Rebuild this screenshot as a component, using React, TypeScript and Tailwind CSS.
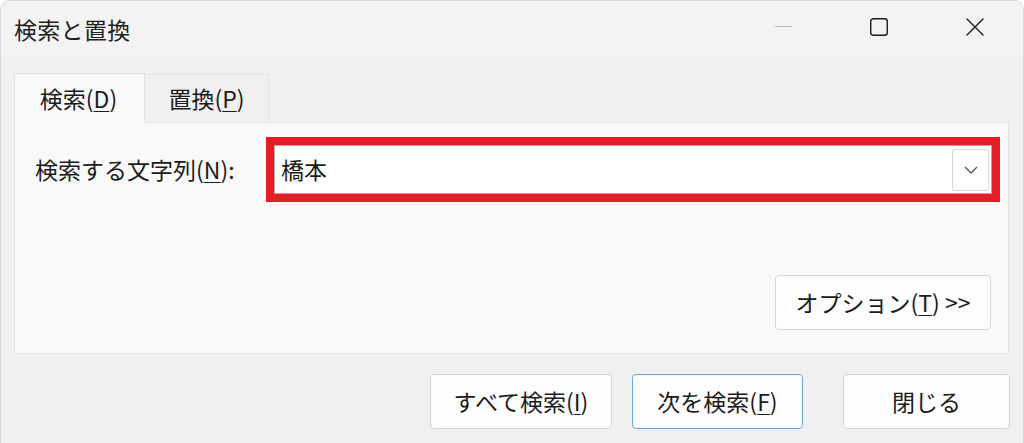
import React from 'react';

function Accel({ children }: { children: React.ReactNode }) {
  return <span className="underline underline-offset-[3px] decoration-1">{children}</span>;
}

function DialogButton({
  children,
  focused = false,
  className = '',
}: {
  children: React.ReactNode;
  focused?: boolean;
  className?: string;
}) {
  return (
    <button
      className={`h-[55px] rounded-[4px] bg-[#fdfdfd] text-[23px] text-[#1b1b1b] flex items-center justify-center ${
        focused ? 'border border-[#6aa8de]' : 'border border-[#d6d6d6]'
      } ${className}`}
    >
      {children}
    </button>
  );
}

export default function App() {
  return (
    <div
      className="w-[1024px] h-[443px] overflow-hidden bg-[#f0f0f0] rounded-t-[10px] border-t border-l border-r border-[#d8d8d8] text-[#1b1b1b]"
      style={{ fontFamily: '"Noto Sans CJK JP", "Noto Sans", sans-serif' }}
    >
      {/* title bar */}
      <div className="h-[56px] bg-[#f3f3f3] flex items-center justify-between">
        <div className="pl-[13px] text-[23px] leading-none text-[#1f1f1f] tracking-[0.3px]">検索と置換</div>
        <div className="flex items-center h-full">
          <div className="w-[96px] h-full flex items-center justify-center">
            <div className="w-[17px] h-px bg-[#bdbdbd] mt-[-5px]" />
          </div>
          <div className="w-[96px] h-full flex items-center justify-center">
            <svg width="18" height="18" viewBox="0 0 18 18" className="mt-[-4px]">
              <rect x="0.75" y="0.75" width="16.5" height="16.5" rx="2.5" fill="none" stroke="#1b1b1b" strokeWidth="1.4" />
            </svg>
          </div>
          <div className="w-[96px] h-full flex items-center justify-center mr-0">
            <svg width="18" height="18" viewBox="0 0 18 18" className="mt-[-4px]">
              <path d="M1 1 L17 17 M17 1 L1 17" stroke="#1b1b1b" strokeWidth="1.4" strokeLinecap="round" />
            </svg>
          </div>
        </div>
      </div>

      <div className="pl-[13px] pr-[14px]">
        {/* tabs */}
        <div className="flex items-end mt-[16px] h-[49px]">
          <div className="w-[131px] h-[50px] bg-[#f9f9f9] border-t border-l border-r border-[#e3e3e3] flex items-center justify-center text-[23px] relative z-10 -mb-px">
            <span className="ml-[-2px]">
              検索(<Accel>D</Accel>)
            </span>
          </div>
          <div className="w-[124px] h-[48px] bg-[#f0f0f0] border-t border-r border-[#e3e3e3] flex items-center justify-center text-[23px]">
            置換(<Accel>P</Accel>)
          </div>
        </div>

        {/* tab panel */}
        <div className="h-[232px] bg-[#f9f9f9] border border-[#e3e3e3] flex flex-col">
          <div className="flex items-center mt-[14px] pl-[20px] pr-[8px]">
            <div className="w-[231px] text-[23px]">
              検索する文字列(<Accel>N</Accel>):
            </div>
            <div className="flex-1 h-[65px] bg-[#e51e25] p-[8px]">
              <div className="h-full bg-white border border-[#a8a8a8] flex items-center">
                <div className="flex-1 pl-[6px] text-[23px]">橋本</div>
                <div className="w-[37px] h-[42px] mr-[2px] border border-[#d8d8d8] rounded-[2px] flex items-center justify-center">
                  <svg width="14" height="8" viewBox="0 0 14 8">
                    <path d="M1 1 L7 7 L13 1" fill="none" stroke="#555" strokeWidth="1.3" />
                  </svg>
                </div>
              </div>
            </div>
          </div>
          <div className="flex-1" />
          <div className="flex justify-end pr-[17px] mb-[23px]">
            <DialogButton className="w-[216px]">
              オプション(<Accel>T</Accel>)&nbsp;&gt;&gt;
            </DialogButton>
          </div>
        </div>

        {/* footer buttons */}
        <div className="flex justify-end mt-[20px] pr-0">
          <DialogButton className="w-[182px]">
            すべて検索(<Accel>I</Accel>)
          </DialogButton>
          <DialogButton focused className="w-[171px] ml-[20px]">
            次を検索(<Accel>F</Accel>)
          </DialogButton>
          <DialogButton className="w-[167px] ml-[40px] mr-[-1px]">閉じる</DialogButton>
        </div>
      </div>
    </div>
  );
}
